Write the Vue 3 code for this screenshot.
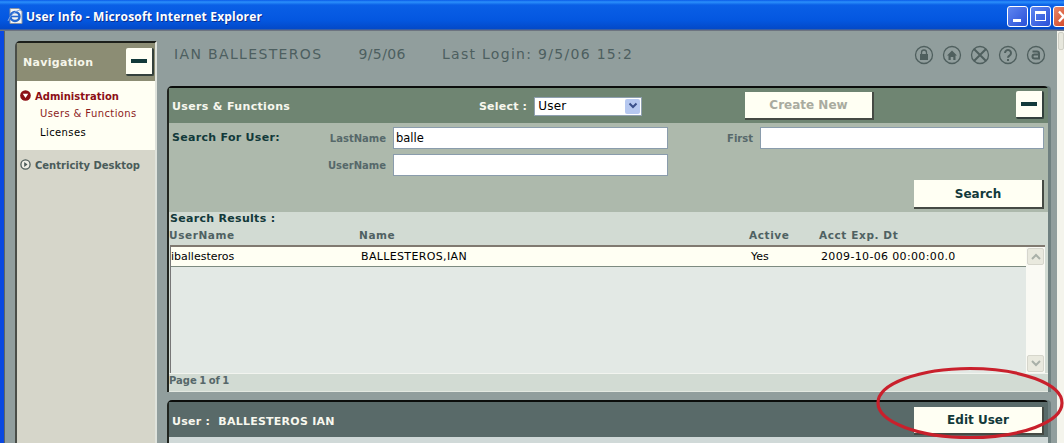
<script setup>
const columns = ['UserName', 'Name', 'Active', 'Acct Exp. Dt']
const result = {
  userName: 'iballesteros',
  name: 'BALLESTEROS,IAN',
  active: 'Yes',
  expires: '2009-10-06 00:00:00.0',
}
</script>

<template>
  <div class="window">
    <header class="titlebar">
      <svg class="ie-icon" width="18" height="18" viewBox="0 0 18 18">
        <path d="M4 1.500h9l3 3v12H4z" fill="#f6f6f2" stroke="#8b94a4" />
        <circle cx="9" cy="9.500" r="4.500" fill="none" stroke="#2468d0" stroke-width="2.400" />
        <path d="M5 9.500h8" stroke="#2468d0" stroke-width="1.600" />
        <path d="M2 14c2-6 8-11 13-11" fill="none" stroke="#7fa6e6" />
      </svg>
      <span class="title-text">User Info - Microsoft Internet Explorer</span>
      <div class="title-buttons">
        <span class="tbtn tbtn-min"><i></i></span>
        <span class="tbtn tbtn-max"><i></i></span>
        <span class="tbtn tbtn-close">
          <svg width="19" height="19" viewBox="0 0 19 19"><path d="M5 4.500l9 10M14 4.500l-9 10" stroke="#fff" stroke-width="2.400" /></svg>
        </span>
      </div>
    </header>

    <div class="frame">
      <div class="page">
        <aside class="sidebar">
          <div class="nav-head">
            <span>Navigation</span>
            <button class="collapse"><i></i></button>
          </div>
          <div class="nav-open">
            <div class="nav-group">
              <svg width="11" height="11" viewBox="0 0 12 12">
                <circle cx="6" cy="6" r="5.800" fill="#8c0f16" />
                <path d="M3 4.200h6L6 8.800z" fill="#fff" />
              </svg>
              <span>Administration</span>
            </div>
            <div class="nav-item nav-active">Users &amp; Functions</div>
            <div class="nav-item">Licenses</div>
          </div>
          <div class="nav-closed">
            <svg width="11" height="11" viewBox="0 0 12 12">
              <circle cx="6" cy="6" r="5" fill="#eeeee6" stroke="#4c5c5a" stroke-width="1.400" />
              <path d="M4.600 3.400L8.200 6 4.600 8.600z" fill="#4c5c5a" />
            </svg>
            <span>Centricity Desktop</span>
          </div>
        </aside>

        <main class="main">
          <div class="topline">
            <span class="user-name">IAN BALLESTEROS</span>
            <span class="login-date">9/5/06</span>
            <span class="last-login">Last Login: 9/5/06 15:2</span>
            <div class="top-icons">
              <svg width="20" height="20" viewBox="0 0 20 20">
                <circle cx="10" cy="10" r="8.500" />
                <rect x="6" y="9" width="8" height="6" class="solid" />
                <path d="M7.500 9V7.500a2.500 2.500 0 0 1 5 0V9" />
              </svg>
              <svg width="20" height="20" viewBox="0 0 20 20">
                <circle cx="10" cy="10" r="8.500" />
                <path d="M5 10.500L10 5.500l5 5h-1.500V15h-2.200v-3H8.700v3H6.500v-4.500z" class="solid" />
              </svg>
              <svg width="20" height="20" viewBox="0 0 20 20">
                <circle cx="10" cy="10" r="8.500" />
                <path d="M4 4l12 12M16 4L4 16" stroke-width="2" />
              </svg>
              <svg width="20" height="20" viewBox="0 0 20 20">
                <circle cx="10" cy="10" r="8.500" />
                <path d="M7 8a3 3 0 1 1 4.500 2.600c-1 .6-1.500 1-1.500 2.200" stroke-width="2" />
                <rect x="9" y="14" width="2" height="2" class="solid" />
              </svg>
              <svg width="20" height="20" viewBox="0 0 20 20">
                <circle cx="10" cy="10" r="8.500" />
                <path d="M6.500 6.500h4.500a2 2 0 0 1 2 2v5H8.500a2 2 0 0 1 0-4H13" stroke-width="2" />
              </svg>
            </div>
          </div>

          <section class="panel">
            <div class="panel-head">
              <span class="panel-title">Users &amp; Functions</span>
              <label class="select-wrap">
                <span>Select :</span>
                <span class="fake-select">
                  <span>User</span>
                  <span class="select-arrow">
                    <svg width="10" height="8" viewBox="0 0 10 8"><path d="M1.500 1.500L5 5l3.500-3.500" fill="none" stroke="#3a4f8a" stroke-width="2" /></svg>
                  </span>
                </span>
              </label>
              <button class="btn btn-disabled">Create New</button>
              <button class="collapse"><i></i></button>
            </div>

            <div class="search">
              <div class="search-title">Search For User:</div>
              <div class="search-fields">
                <span class="field-label">LastName</span>
                <input class="text-input" value="balle" readonly />
                <span class="field-label">First</span>
                <input class="text-input" readonly />
                <span class="field-label">UserName</span>
                <input class="text-input" readonly />
              </div>
              <div class="search-actions">
                <button class="btn btn-search">Search</button>
              </div>
            </div>

            <div class="results">
              <div class="results-title">Search Results :</div>
              <div class="results-cols">
                <span v-for="col in columns" :key="col">{{ col }}</span>
              </div>
              <div class="results-box">
                <div class="results-list">
                  <div class="result-row">
                    <span>{{ result.userName }}</span>
                    <span class="wide">{{ result.name }}</span>
                    <span>{{ result.active }}</span>
                    <span class="wide">{{ result.expires }}</span>
                  </div>
                </div>
                <div class="list-scroll">
                  <span class="scroll-btn">
                    <svg width="10" height="7" viewBox="0 0 10 7"><path d="M1 6l4-4 4 4" fill="none" stroke="#a9b0a8" stroke-width="2" /></svg>
                  </span>
                  <span class="scroll-btn">
                    <svg width="10" height="7" viewBox="0 0 10 7"><path d="M1 1l4 4 4-4" fill="none" stroke="#a9b0a8" stroke-width="2" /></svg>
                  </span>
                </div>
              </div>
              <div class="pager">Page 1 of 1</div>
            </div>
          </section>

          <section class="panel panel-user">
            <div class="panel-head panel-head-dark">
              <span class="panel-title">User :&nbsp; BALLESTEROS IAN</span>
              <button class="btn btn-edit">Edit User</button>
            </div>
            <div class="panel-rest"></div>
          </section>
        </main>
      </div>

      <div class="page-scroll">
        <span class="page-scroll-btn"></span>
      </div>
    </div>

    <!-- red marker drawn over the screenshot -->
    <svg class="marker" width="1064" height="443" viewBox="0 0 1064 443">
      <ellipse cx="970" cy="403" rx="92" ry="34.500" fill="none" stroke="#c9202c" stroke-width="3.200" />
    </svg>
  </div>
</template>

<style scoped>
.window {
  position: relative;
  width: 1064px;
  height: 443px;
  overflow: hidden;
  display: flex;
  flex-direction: column;
  font-family: "DejaVu Sans", Verdana, sans-serif;
  background: #919e9d;
}

.titlebar {
  flex: 0 0 31px;
  display: flex;
  align-items: center;
  padding-left: 6px;
  background: linear-gradient(#0a5ae8 0, #2b90fb 2px, #0a5fe6 5px, #0457e0 20px, #0349c8 29px, #6d7480 30px);
}

.ie-icon {
  margin-right: 2px;
}

.title-text {
  padding-top: 2px;
  font: bold 12px "Open Sans", "Liberation Sans", sans-serif;
  color: #fff;
  text-shadow: 1px 1px 0 #0b2f90;
  letter-spacing: 0.2px;
}

.title-buttons {
  margin-left: auto;
  display: flex;
  gap: 2px;
  margin-top: 1px;
  margin-right: -10px;
}

.tbtn {
  width: 19px;
  height: 19px;
  border: 1px solid #fff;
  border-radius: 3px;
  background: linear-gradient(135deg, #5f86f0, #2a50d8);
  display: flex;
  align-items: center;
  justify-content: center;
}

.tbtn-min i {
  width: 8px;
  height: 3px;
  background: #fff;
  margin-top: 9px;
  margin-right: 2px;
}

.tbtn-max i {
  width: 11px;
  height: 10px;
  border: 1px solid #fff;
  border-top-width: 3px;
  box-sizing: border-box;
}

.tbtn-close {
  background: linear-gradient(135deg, #e8876a, #cf3a18);
}

.frame {
  flex: 1;
  min-height: 0;
  display: flex;
  border-left: 4px solid #0a48e0;
}

.page {
  flex: 1;
  min-width: 0;
  display: flex;
  gap: 10px;
  padding: 10px 9px 0 10px;
  border-left: 1px solid #5c6664;
}

.sidebar {
  flex: 0 0 142px;
  border-left: 2px solid #4a4e48;
  border-top: 2px solid #1c1f1a;
  border-top-left-radius: 5px;
  border-right: 2px solid #dfe3dc;
  box-sizing: border-box;
  background: #d6d6ca;
}

.nav-head {
  height: 38px;
  background: #8c8d74;
  display: flex;
  align-items: center;
  justify-content: space-between;
  padding: 0 1px 0 6px;
  color: #f6f6ea;
  font-size: 11px;
  font-weight: bold;
  letter-spacing: 0.3px;
}

.collapse {
  width: 28px;
  height: 28px;
  padding: 0;
  border: 0;
  border-right: 2px solid #33403c;
  border-bottom: 2px solid #33403c;
  border-radius: 2px;
  background: #fffff4;
  display: flex;
  align-items: center;
  justify-content: center;
}

.collapse i {
  width: 16px;
  height: 4px;
  background: #12393a;
}

.nav-open {
  height: 69px;
  background: #fffff3;
  box-sizing: border-box;
  padding-top: 8px;
  font-size: 10px;
}

.nav-group {
  display: flex;
  align-items: center;
  gap: 4px;
  padding-left: 3px;
  color: #8c0f16;
  font-weight: bold;
  font-size: 10px;
  height: 15px;
}

.nav-group svg {
  margin-top: -3px;
}

.nav-item {
  padding-left: 23px;
  height: 19px;
  line-height: 19px;
  color: #000;
  letter-spacing: 0.4px;
}

.nav-active {
  color: #8c1c1c;
}

.nav-closed {
  display: flex;
  align-items: center;
  gap: 4px;
  padding: 10px 0 0 3px;
  color: #4a5c5a;
  font-size: 10px;
  font-weight: bold;
}

.nav-closed svg {
  margin-top: -2px;
}

.main {
  flex: 1;
  min-width: 0;
}

.topline {
  height: 26px;
  padding-bottom: 9px;
  display: flex;
  align-items: center;
  gap: 36px;
  padding-left: 7px;
  color: #4d5f60;
  font-size: 14px;
}

.user-name {
  letter-spacing: 1.350px;
}

.login-date {
  letter-spacing: 0.400px;
}

.last-login {
  letter-spacing: 1.300px;
}

.top-icons {
  margin-left: auto;
  display: flex;
  gap: 8px;
  margin-top: 2px;
  margin-right: 2px;
}

.top-icons svg {
  fill: none;
  stroke: #4f5f5e;
  stroke-width: 1.300;
}

.top-icons .solid {
  fill: #4f5f5e;
  stroke: none;
}

.panel {
  margin-top: 10px;
  border-top: 2px solid #0b0d0b;
  border-left: 2px solid #20241f;
  border-top-left-radius: 5px;
  border-top-right-radius: 4px;
  box-shadow: 3px 0 0 #6f8080;
}

.panel-head {
  height: 35px;
  display: flex;
  align-items: center;
  background: #6f8572;
  padding-left: 3px;
  padding-right: 4px;
  color: #f7f7ee;
  font-size: 11px;
  font-weight: bold;
}

.panel-title {
  width: 290px;
  margin-top: 2px;
  letter-spacing: 0.350px;
}

.select-wrap {
  display: flex;
  align-items: center;
  gap: 7px;
  margin-top: 1px;
  letter-spacing: 0.200px;
  margin-left: 17px;
  width: 266px;
}

.fake-select {
  width: 108px;
  height: 19px;
  box-sizing: border-box;
  border: 1px solid #8fa0b0;
  background: #fff;
  color: #000;
  font-size: 12px;
  font-weight: normal;
  display: flex;
  justify-content: space-between;
  align-items: center;
  padding: 0 1px 0 3px;
}

.select-arrow {
  width: 15px;
  height: 15px;
  background: #b6c8f0;
  border-radius: 2px;
  display: flex;
  align-items: center;
  justify-content: center;
}

.btn {
  border: 0;
  border-right: 2px solid #454a44;
  border-bottom: 2px solid #454a44;
  background: #fffff3;
  color: #12393a;
  font: bold 12px "DejaVu Sans", sans-serif;
  height: 28px;
  padding: 0;
}

.btn-disabled {
  width: 129px;
  margin-top: 1px;
  color: #a9ab9f;
}

.panel-head .collapse {
  margin-left: auto;
  margin-top: -1px;
}

.search {
  height: 89px;
  position: relative;
  background: #adb9ac;
  box-sizing: border-box;
  padding: 4px 4px 0 3px;
}

.search-title {
  position: absolute;
  left: 3px;
  top: 8px;
  color: #12393a;
  font-size: 11px;
  font-weight: bold;
  letter-spacing: 0.3px;
}

.search-fields {
  display: grid;
  grid-template-columns: 221px 275px 92px 284px;
  grid-auto-rows: 22px;
  row-gap: 5px;
  align-items: center;
}

.field-label {
  text-align: right;
  padding-right: 7px;
  color: #56686a;
  font-size: 10px;
  font-weight: bold;
}

.text-input {
  width: 100%;
  height: 22px;
  box-sizing: border-box;
  border: 1px solid #8a9cac;
  background: #fff;
  padding: 0 2px 1px;
  font: 11.500px "DejaVu Sans", sans-serif;
  color: #000;
  outline: none;
}

.search-actions {
  display: flex;
  justify-content: flex-end;
  margin-top: 4px;
}

.btn-search {
  width: 130px;
  height: 29px;
}

.results {
  height: 180px;
  background: #d2dbd3;
  border-bottom: 1px solid #e4e9e2;
  box-sizing: border-box;
  display: flex;
  flex-direction: column;
}

.results-title {
  height: 14px;
  line-height: 14px;
  padding-left: 1px;
  color: #12393a;
  font-size: 11px;
  font-weight: bold;
  letter-spacing: 0.3px;
}

.results-cols,
.result-row {
  display: grid;
  grid-template-columns: 190px 390px 70px 1fr;
}

.results-cols {
  height: 19px;
  box-sizing: border-box;
  padding-bottom: 2px;
  align-items: center;
  color: #4f6162;
  font-size: 10.500px;
  font-weight: bold;
  letter-spacing: 0.600px;
}

.results-box {
  flex: 1;
  min-height: 0;
  display: flex;
  margin-left: 1px;
  margin-right: 3px;
  border-top: 2px solid #807a70;
  border-left: 1px solid #777;
  background: #e3e9e5;
}

.results-list {
  flex: 1;
}

.result-row {
  height: 20px;
  box-sizing: border-box;
  align-items: center;
  background: #fffff3;
  border-bottom: 1px solid #7d8b80;
  color: #000;
  font-size: 11px;
  grid-template-columns: 190px 390px 70px 1fr;
}

.wide {
  letter-spacing: 0.350px;
}

.list-scroll {
  flex: 0 0 17px;
  background: #fafaf4;
  display: flex;
  flex-direction: column;
  justify-content: space-between;
  padding: 1px;
}

.scroll-btn {
  height: 15px;
  background: #e9e9de;
  border: 1px solid #d6d6cc;
  border-radius: 2px;
  display: flex;
  align-items: center;
  justify-content: center;
}

.pager {
  height: 17px;
  line-height: 13px;
  border-top: 1px solid #f2f4ef;
  color: #56686a;
  font-size: 10px;
  font-weight: bold;
  word-spacing: -1px;
}

.panel-user {
  margin-top: 8px;
}

.panel-head-dark {
  background: #596a69;
  justify-content: space-between;
}

.panel-head-dark .panel-title {
  margin-top: 4px;
  letter-spacing: 0.250px;
}

.btn-edit {
  width: 130px;
  height: 28px;
  margin-top: 3px;
}

.panel-rest {
  height: 10px;
  background: #d0d9d8;
}

.page-scroll {
  flex: 0 0 7px;
  background: #f4f4ec;
  box-sizing: border-box;
  padding-top: 1px;
  padding-left: 1px;
}

.page-scroll-btn {
  display: block;
  height: 16px;
  background: #e6e6dc;
  border: 1px solid #cfcfc5;
  border-radius: 2px;
}

.marker {
  position: absolute;
  left: 0;
  top: 0;
  pointer-events: none;
}
</style>
